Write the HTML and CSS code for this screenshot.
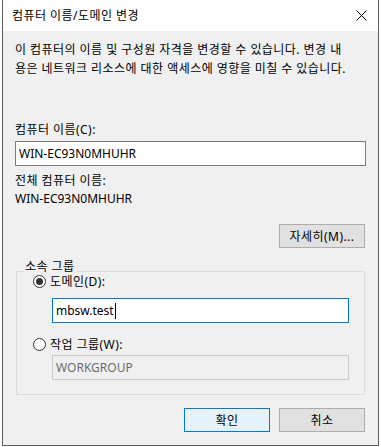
FILE: index.html
```html
<!DOCTYPE html>
<html lang="ko">
<head>
    <meta charset="UTF-8">
    <meta name="viewport" content="width=device-width, initial-scale=1.0">
    <title>컴퓨터 이름/도메인 변경</title>
    <link rel="stylesheet" href="styles.css">
</head>
<body>

<div class="window">
    <div class="titlebar">
        <span class="title ko">컴퓨터 이름/도메인 변경</span>
        <svg class="close" width="11" height="11" viewBox="0 0 11 11">
            <path d="M0.5 0.5 L10.5 10.5 M10.5 0.5 L0.5 10.5" stroke="#000" stroke-width="1" fill="none"/>
        </svg>
    </div>

    <div class="content">
        <p class="desc ko">이 컴퓨터의 이름 및 구성원 자격을 변경할 수 있습니다. 변경 내<br>용은 네트워크 리소스에 대한 액세스에 영향을 미칠 수 있습니다.</p>

        <div class="label name-label ko">컴퓨터 이름(C):</div>
        <div class="textbox">WIN-EC93N0MHUHR</div>

        <div class="label full-label ko">전체 컴퓨터 이름:</div>
        <div class="label">WIN-EC93N0MHUHR</div>

        <div class="button-row more-row">
            <div class="btn ko">자세히(M)...</div>
        </div>

        <div class="group">
            <span class="group-title ko">소속 그룹</span>

            <div class="radio-row">
                <span class="radio checked"><span class="dot"></span></span>
                <span class="ko">도메인(D):</span>
            </div>
            <div class="textbox group-box focused">mbsw.test<span class="caret"></span></div>

            <div class="radio-row second">
                <span class="radio"></span>
                <span class="ko">작업 그룹(W):</span>
            </div>
            <div class="textbox group-box disabled">WORKGROUP</div>
        </div>

        <div class="button-row footer">
            <div class="btn default ko">확인</div>
            <div class="btn ko">취소</div>
        </div>
    </div>
</div>

</body>
</html>
```

FILE: styles.css
```css
body {
    margin: 0;
    background: #ffffff;
    font-family: "Noto Sans", "Noto Sans CJK KR", sans-serif;
    font-size: 12px;
    color: #000;
}
.ko {
    letter-spacing: 0.45px;
}
.window {
    margin-left: 2px;
    width: 377px;
    height: 446px;
    box-sizing: border-box;
    border: 1px solid #5b5b5b;
    border-top: none;
    background: #f0f0f0;
}
.titlebar {
    height: 31px;
    background: #ffffff;
    display: flex;
    align-items: center;
    justify-content: space-between;
    padding: 0 11px 0 9px;
}
.title {
    line-height: 16px;
}
.close {
    display: block;
}
.content {
    padding: 9px 12px 0 12px;
}
.desc {
    margin: 0;
    line-height: 19px;
    white-space: nowrap;
}
.label {
    line-height: 18px;
}
.name-label {
    margin-top: 43px;
}
.full-label {
    margin-top: 6px;
}
.textbox {
    margin-top: 2px;
    height: 25px;
    box-sizing: border-box;
    border: 1px solid #7a7a7a;
    background: #ffffff;
    padding-left: 3px;
    line-height: 23px;
    display: flex;
    align-items: center;
}
.button-row {
    display: flex;
    justify-content: flex-end;
    gap: 9px;
    padding-right: 1px;
}
.more-row {
    margin-top: 16px;
}
.btn {
    width: 86px;
    height: 24px;
    box-sizing: border-box;
    border: 1px solid #adadad;
    background: #e1e1e1;
    display: flex;
    align-items: center;
    justify-content: center;
}
.btn.default {
    border-color: #0078d7;
    background: #e5f1fb;
}
.group {
    position: relative;
    margin: 23px 1px 0 1px;
    border: 1px solid #dcdcdc;
    padding: 0 0 14px 16px;
}
.group-title {
    position: absolute;
    top: -10px;
    left: 6px;
    padding: 0 2px;
    background: #f0f0f0;
    line-height: 10px;
}
.radio-row {
    display: flex;
    align-items: center;
    gap: 4px;
    height: 18px;
}
.radio-row.second {
    margin-top: 12px;
}
.radio {
    width: 13px;
    height: 13px;
    box-sizing: border-box;
    border: 1px solid #333333;
    border-radius: 50%;
    background: #ffffff;
    display: flex;
    align-items: center;
    justify-content: center;
}
.dot {
    width: 7px;
    height: 7px;
    border-radius: 50%;
    background: #333333;
}
.group-box {
    margin-left: 19px;
    width: 297px;
}
.group-box.focused {
    margin-top: 8px;
    border-color: #0078d7;
}
.group-box.disabled {
    margin-top: 2px;
    border-color: #cccccc;
    background: #f0f0f0;
    color: #6d6d6d;
}
.caret {
    display: inline-block;
    width: 1px;
    height: 16px;
    margin-left: 1px;
    background: #000;
}
.footer {
    margin-top: 13px;
}
```
